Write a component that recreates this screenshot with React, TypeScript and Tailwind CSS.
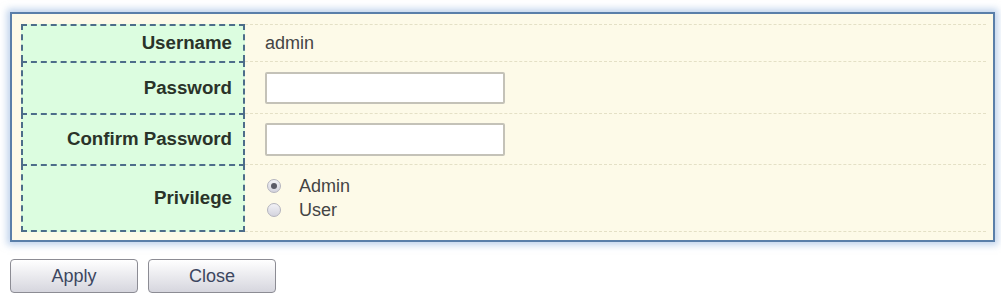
import React from "react";

const font = { fontFamily: '"Liberation Sans", Arial, sans-serif' };

function Radio({ checked }: { checked?: boolean }) {
  return (
    <span className="relative inline-flex h-[14px] w-[14px] items-center justify-center rounded-full border border-[#b4b4be] bg-gradient-to-b from-[#f2f2f6] to-[#d4d4de]">
      {checked && <span className="h-[6px] w-[6px] rounded-full bg-[#5a5a66]" />}
    </span>
  );
}

function Row({
  label,
  h,
  last,
  children,
}: {
  label: string;
  h: string;
  last?: boolean;
  children: React.ReactNode;
}) {
  return (
    <div className={`flex ${h}`}>
      <div
        className={`flex w-[224px] shrink-0 items-center justify-end border-x-2 border-t-2 border-dashed border-[#4d6d8a] bg-[#dcfde0] pr-[11px] text-[18.7px] font-bold text-[#2a3329] ${
          last ? "border-b-2" : ""
        }`}
      >
        {label}
      </div>
      <div
        className={`flex flex-1 items-center border-t border-dashed border-[#e4e0c6] pl-[20px] ${
          last ? "border-b" : ""
        }`}
      >
        {children}
      </div>
    </div>
  );
}

export default function App() {
  return (
    <div className="h-[295px] w-[1001px] bg-white pl-[10px] pt-[12px]" style={font}>
      <div className="w-[985px] border-2 border-[#5a7fa9] bg-[#fdfae8] pb-[8px] pl-[9px] pr-[7px] pt-[10px] shadow-[0_0_7px_3px_rgba(140,175,220,0.55)]">
        <Row label="Username" h="h-[37px]">
          <span className="text-[18px] text-[#444]">admin</span>
        </Row>
        <Row label="Password" h="h-[52px]">
          <div className="h-[32px] w-[240px] rounded-[2px] border-2 border-[#c4c2b8] bg-white" />
        </Row>
        <Row label="Confirm Password" h="h-[51px]">
          <div className="h-[33px] w-[240px] rounded-[2px] border-2 border-[#c4c2b8] bg-white" />
        </Row>
        <Row label="Privilege" h="h-[68px]" last>
          <div className="ml-[2px] flex flex-col text-[18px] leading-[24px] text-[#444]">
            <div className="flex items-center gap-[18px]">
              <Radio checked />
              <span>Admin</span>
            </div>
            <div className="flex items-center gap-[18px]">
              <Radio />
              <span>User</span>
            </div>
          </div>
        </Row>
      </div>
      <div className="mt-[17px] flex gap-[10px]">
        <button className="h-[34px] w-[128px] rounded-[4px] border border-[#8c8c94] bg-gradient-to-b from-white to-[#d6d6de] text-[18px] text-[#3c4660]">
          Apply
        </button>
        <button className="h-[34px] w-[128px] rounded-[4px] border border-[#8c8c94] bg-gradient-to-b from-white to-[#d6d6de] text-[18px] text-[#3c4660]">
          Close
        </button>
      </div>
    </div>
  );
}
